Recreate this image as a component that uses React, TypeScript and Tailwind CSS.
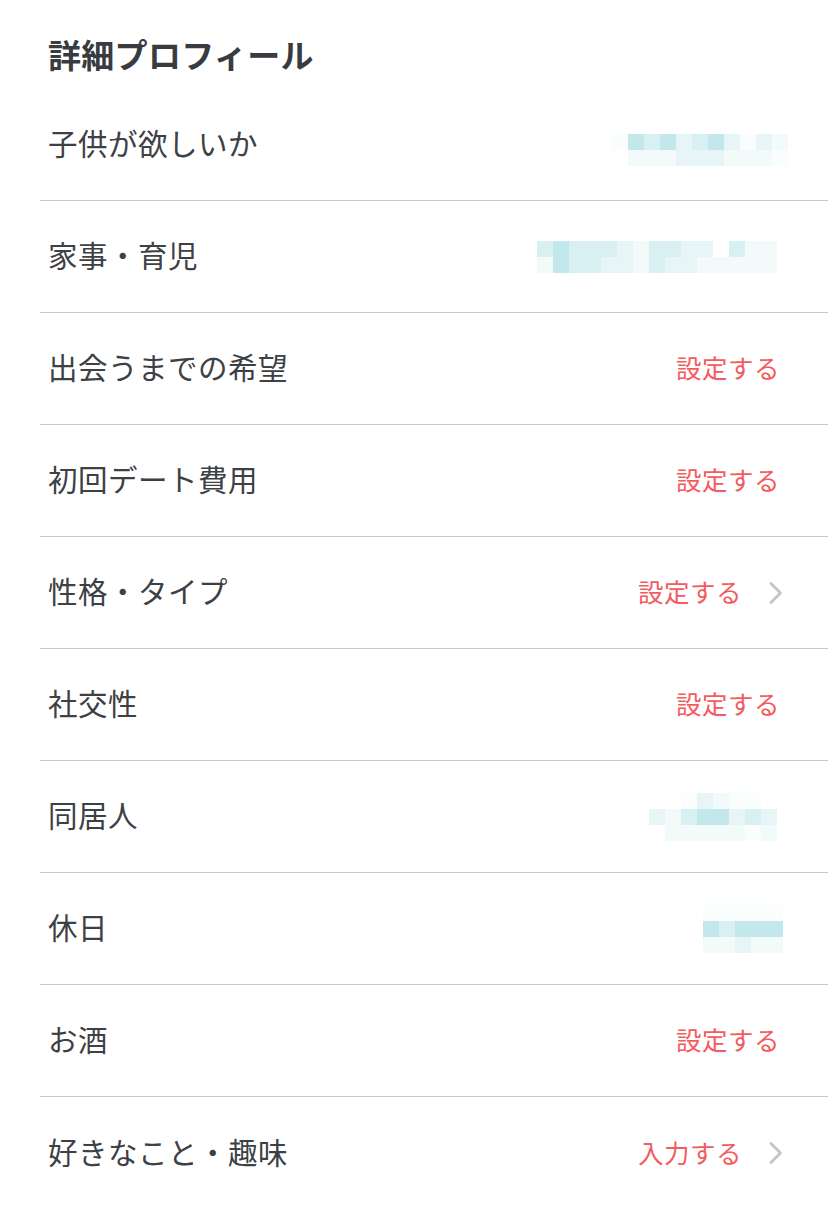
type Row = {
  label: string;
  action?: string;
  chevron?: boolean;
  blur?: { cols: number; shift: string; offset: number[]; cells: string[][] };
};

// mosaic swatches standing in for the hidden values
const T1 = "#c3e8eb";
const T2 = "#d8f0f2";
const T3 = "#e7f5f6";
const T4 = "#f2fafa";
const T5 = "#fafdfd";

const ROWS: Row[] = [
  {
    label: "子供が欲しいか",
    blur: {
      cols: 11,
      shift: "mr-[-3px] mt-[10px]",
      offset: [0, 1],
      cells: [
        [T5, T1, T2, T1, T3, T2, T1, T3, T5, T3, T4],
        [T4, T4, T4, T3, T3, T3, T4, T4, T4, T5],
      ],
    },
  },
  {
    label: "家事・育児",
    blur: {
      cols: 15,
      shift: "mr-[8px]",
      offset: [0, 0],
      cells: [
        [T2, T1, T2, T2, T2, T3, T4, T2, T2, T3, T3, "#ffffff", T2, T4, T4],
        [T4, T1, T2, T2, T3, T3, T4, T2, T3, T3, T4, T4, T4, T4, T4],
      ],
    },
  },
  { label: "出会うまでの希望", action: "設定する" },
  { label: "初回デート費用", action: "設定する" },
  { label: "性格・タイプ", action: "設定する", chevron: true },
  { label: "社交性", action: "設定する" },
  {
    label: "同居人",
    blur: {
      cols: 8,
      shift: "mr-[8px]",
      offset: [2, 0, 1],
      cells: [
        [T5, T3, T4, T5, T5],
        [T3, T4, T2, T1, T1, T3, T2, T3],
        [T4, T4, T4, T4, T4, T5, T4],
      ],
    },
  },
  {
    label: "休日",
    blur: {
      cols: 5,
      shift: "mr-[2px]",
      offset: [0, 0, 0],
      cells: [
        [T5, T5, T5, T5, T5],
        [T1, T2, T1, T1, T1],
        [T4, T4, T3, T4, T4],
      ],
    },
  },
  { label: "お酒", action: "設定する" },
  { label: "好きなこと・趣味", action: "入力する", chevron: true },
];

function Mosaic({ blur }: { blur: NonNullable<Row["blur"]> }) {
  return (
    <div className={"flex flex-col " + blur.shift}>
      {blur.cells.map((line, i) => (
        <div key={i} className="flex" style={{ paddingLeft: blur.offset[i] * 16 }}>
          {line.map((c, j) => (
            <div key={j} className="h-4 w-4" style={{ backgroundColor: c }} />
          ))}
          {Array.from({ length: Math.max(0, blur.cols - line.length - blur.offset[i]) }).map((_, k) => (
            <div key={"e" + k} className="h-4 w-4" />
          ))}
        </div>
      ))}
    </div>
  );
}

function Chevron() {
  return (
    <svg width="18" height="24" viewBox="0 0 18 24" className="ml-[25px]">
      <path d="M4 2.5 L13.5 12 L4 21.5" fill="none" stroke="#c6c6c6" strokeWidth="3" strokeLinecap="round" strokeLinejoin="round" />
    </svg>
  );
}

export default function App() {
  return (
    <div
      className="min-h-[1218px] w-[828px] bg-white text-[#3d4045]"
      style={{ fontFamily: '"Noto Sans CJK JP", "Noto Sans", sans-serif' }}
    >
      <div className="h-[89px] pl-[48px] pt-[30px]">
        <h2 className="text-[33px] font-bold leading-[48px] tracking-[0.3px] text-[#383b40]">詳細プロフィール</h2>
      </div>
      <ul className="ml-[40px]">
        {ROWS.map((row, i) => (
          <li
            key={row.label}
            className={
              "flex h-[112px] items-center justify-between pl-2 pr-[43px] " +
              (i < ROWS.length - 1 ? "border-b border-[#c8c8c8]" : "")
            }
          >
            <span className="mb-[3px] text-[29.5px] leading-none tracking-[0.5px]">{row.label}</span>
            {row.blur && <Mosaic blur={row.blur} />}
            {row.action && (
              <span className="flex items-center">
                <span
                  className={
                    "mb-[3px] text-[25.5px] leading-none tracking-[0.5px] text-[#f35b5e] " +
                    (row.chevron ? "" : "mr-[5px]")
                  }
                >
                  {row.action}
                </span>
                {row.chevron && <Chevron />}
              </span>
            )}
          </li>
        ))}
      </ul>
    </div>
  );
}
